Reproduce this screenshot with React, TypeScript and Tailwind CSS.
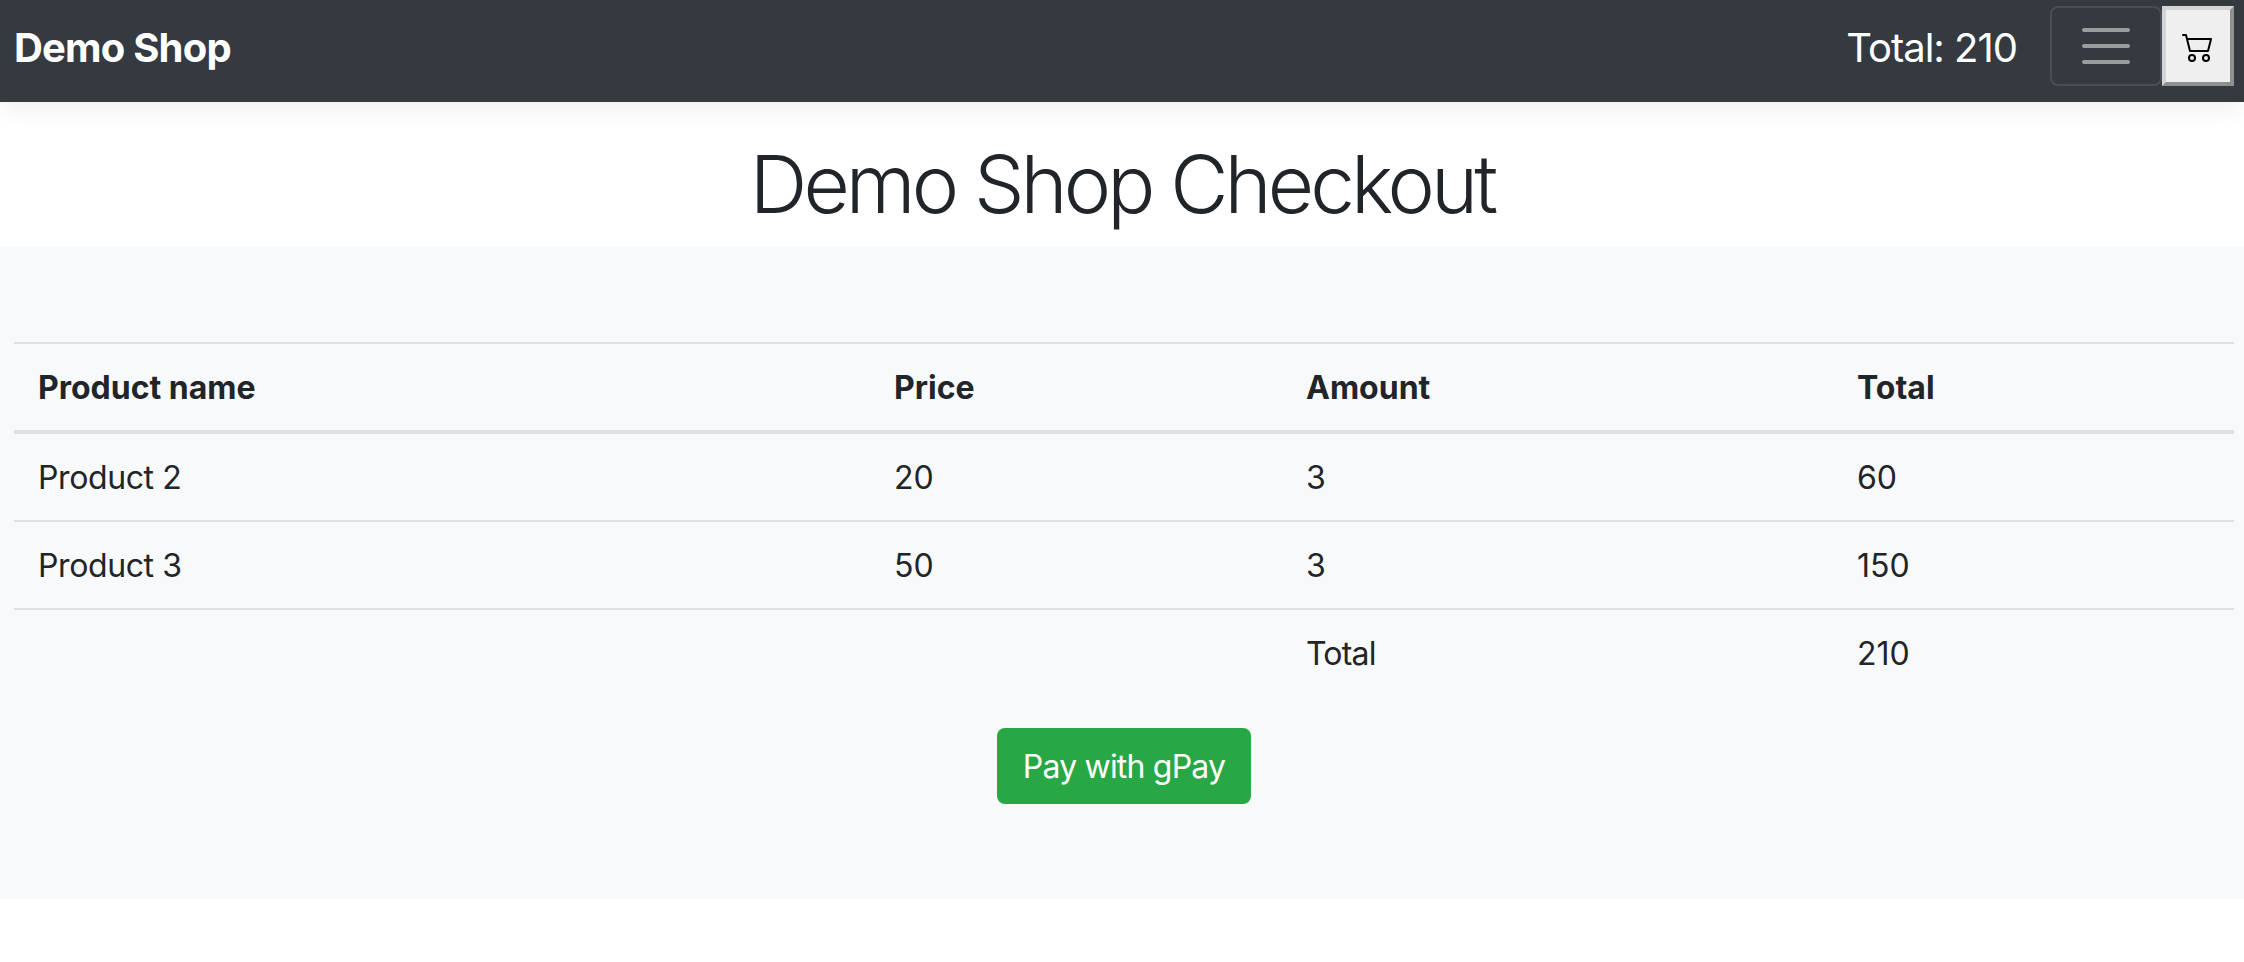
const ROWS = [
  { name: "Product 2", price: "20", amount: "3", total: "60" },
  { name: "Product 3", price: "50", amount: "3", total: "150" },
];

function CartIcon() {
  return (
    <svg width="32" height="32" viewBox="0 0 16 16" fill="currentColor">
      <path d="M0 2.5A.5.5 0 0 1 .5 2H2a.5.5 0 0 1 .485.379L2.89 4H14.5a.5.5 0 0 1 .485.621l-1.5 6A.5.5 0 0 1 13 11H4a.5.5 0 0 1-.485-.379L1.61 3H.5a.5.5 0 0 1-.5-.5zM3.14 5l1.25 5h8.22l1.25-5H3.14zM5 13a1 1 0 1 0 0 2 1 1 0 0 0 0-2zm-2 1a2 2 0 1 1 4 0 2 2 0 0 1-4 0zm9-1a1 1 0 1 0 0 2 1 1 0 0 0 0-2zm-2 1a2 2 0 1 1 4 0 2 2 0 0 1-4 0z" />
    </svg>
  );
}

function Navbar() {
  return (
    <nav className="flex h-[102px] items-center justify-between bg-[#343a40] pb-[10px] pl-[14px] pr-[10px] shadow-[0_8px_24px_rgba(0,0,0,0.06)]">
      <a className="mt-[3px] text-[40px] font-bold leading-none tracking-[-0.8px] text-white">Demo Shop</a>
      <div className="flex items-center">
        <span className="mr-[33px] mt-[4px] text-[40px] leading-none tracking-[-1px] text-white">Total: 210</span>
        <button className="flex h-[80px] w-[112px] items-center justify-center rounded-lg border-2 border-white/10">
          <svg width="60" height="60" viewBox="0 0 30 30" fill="none" stroke="rgba(255,255,255,0.5)" strokeWidth="2" strokeLinecap="round">
            <path d="M4 7h22M4 15h22M4 23h22" />
          </svg>
        </button>
        <button className="flex h-[80px] w-[72px] items-center justify-center border-4 border-t-[#d4d4d4] border-l-[#d4d4d4] border-r-[#8f8f8f] border-b-[#8f8f8f] bg-[#efefef] text-black">
          <CartIcon />
        </button>
      </div>
    </nav>
  );
}

export default function App() {
  const cell = "px-6 pb-[18px] pt-[20px] text-left text-[32px] font-normal leading-[48px]";
  const head = "px-6 pb-[18px] pt-[20px] text-left text-[32px] font-bold leading-[48px]";
  return (
    <div className="min-h-[962px] bg-white font-['Inter',sans-serif] text-[#212529]">
      <Navbar />
      <h1 className="h-[144px] pt-[40px] text-center text-[80px] font-[350] leading-[84px] tracking-[-3.9px]">Demo Shop Checkout</h1>
      <main className="h-[653px] bg-[#f8f9fa] pl-[14px] pr-[10px] pt-[96px]">
        <table className="w-full table-fixed border-collapse">
          <colgroup>
            <col className="w-[856px]" />
            <col className="w-[412px]" />
            <col className="w-[551px]" />
            <col />
          </colgroup>
          <thead>
            <tr className="border-t-2 border-b-4 border-[#dee2e6]">
              <th className={head}>Product name</th>
              <th className={head}>Price</th>
              <th className={head}>Amount</th>
              <th className={head}>Total</th>
            </tr>
          </thead>
          <tbody>
            {ROWS.map((row) => (
              <tr key={row.name} className="border-b-2 border-[#dee2e6]">
                <td className={`${cell} tracking-[-0.4px]`}>{row.name}</td>
                <td className={cell}>{row.price}</td>
                <td className={cell}>{row.amount}</td>
                <td className={cell}>{row.total}</td>
              </tr>
            ))}
            <tr>
              <td className={cell}></td>
              <td className={cell}></td>
              <td className={`${cell} tracking-[-0.8px]`}>Total</td>
              <td className={cell}>210</td>
            </tr>
          </tbody>
        </table>
        <div className="mt-[32px] flex justify-center">
          <button className="h-[76px] w-[254px] rounded-lg bg-[#28a745] pt-[1px] text-[32px] tracking-[-0.8px] text-white">Pay with gPay</button>
        </div>
      </main>
    </div>
  );
}
